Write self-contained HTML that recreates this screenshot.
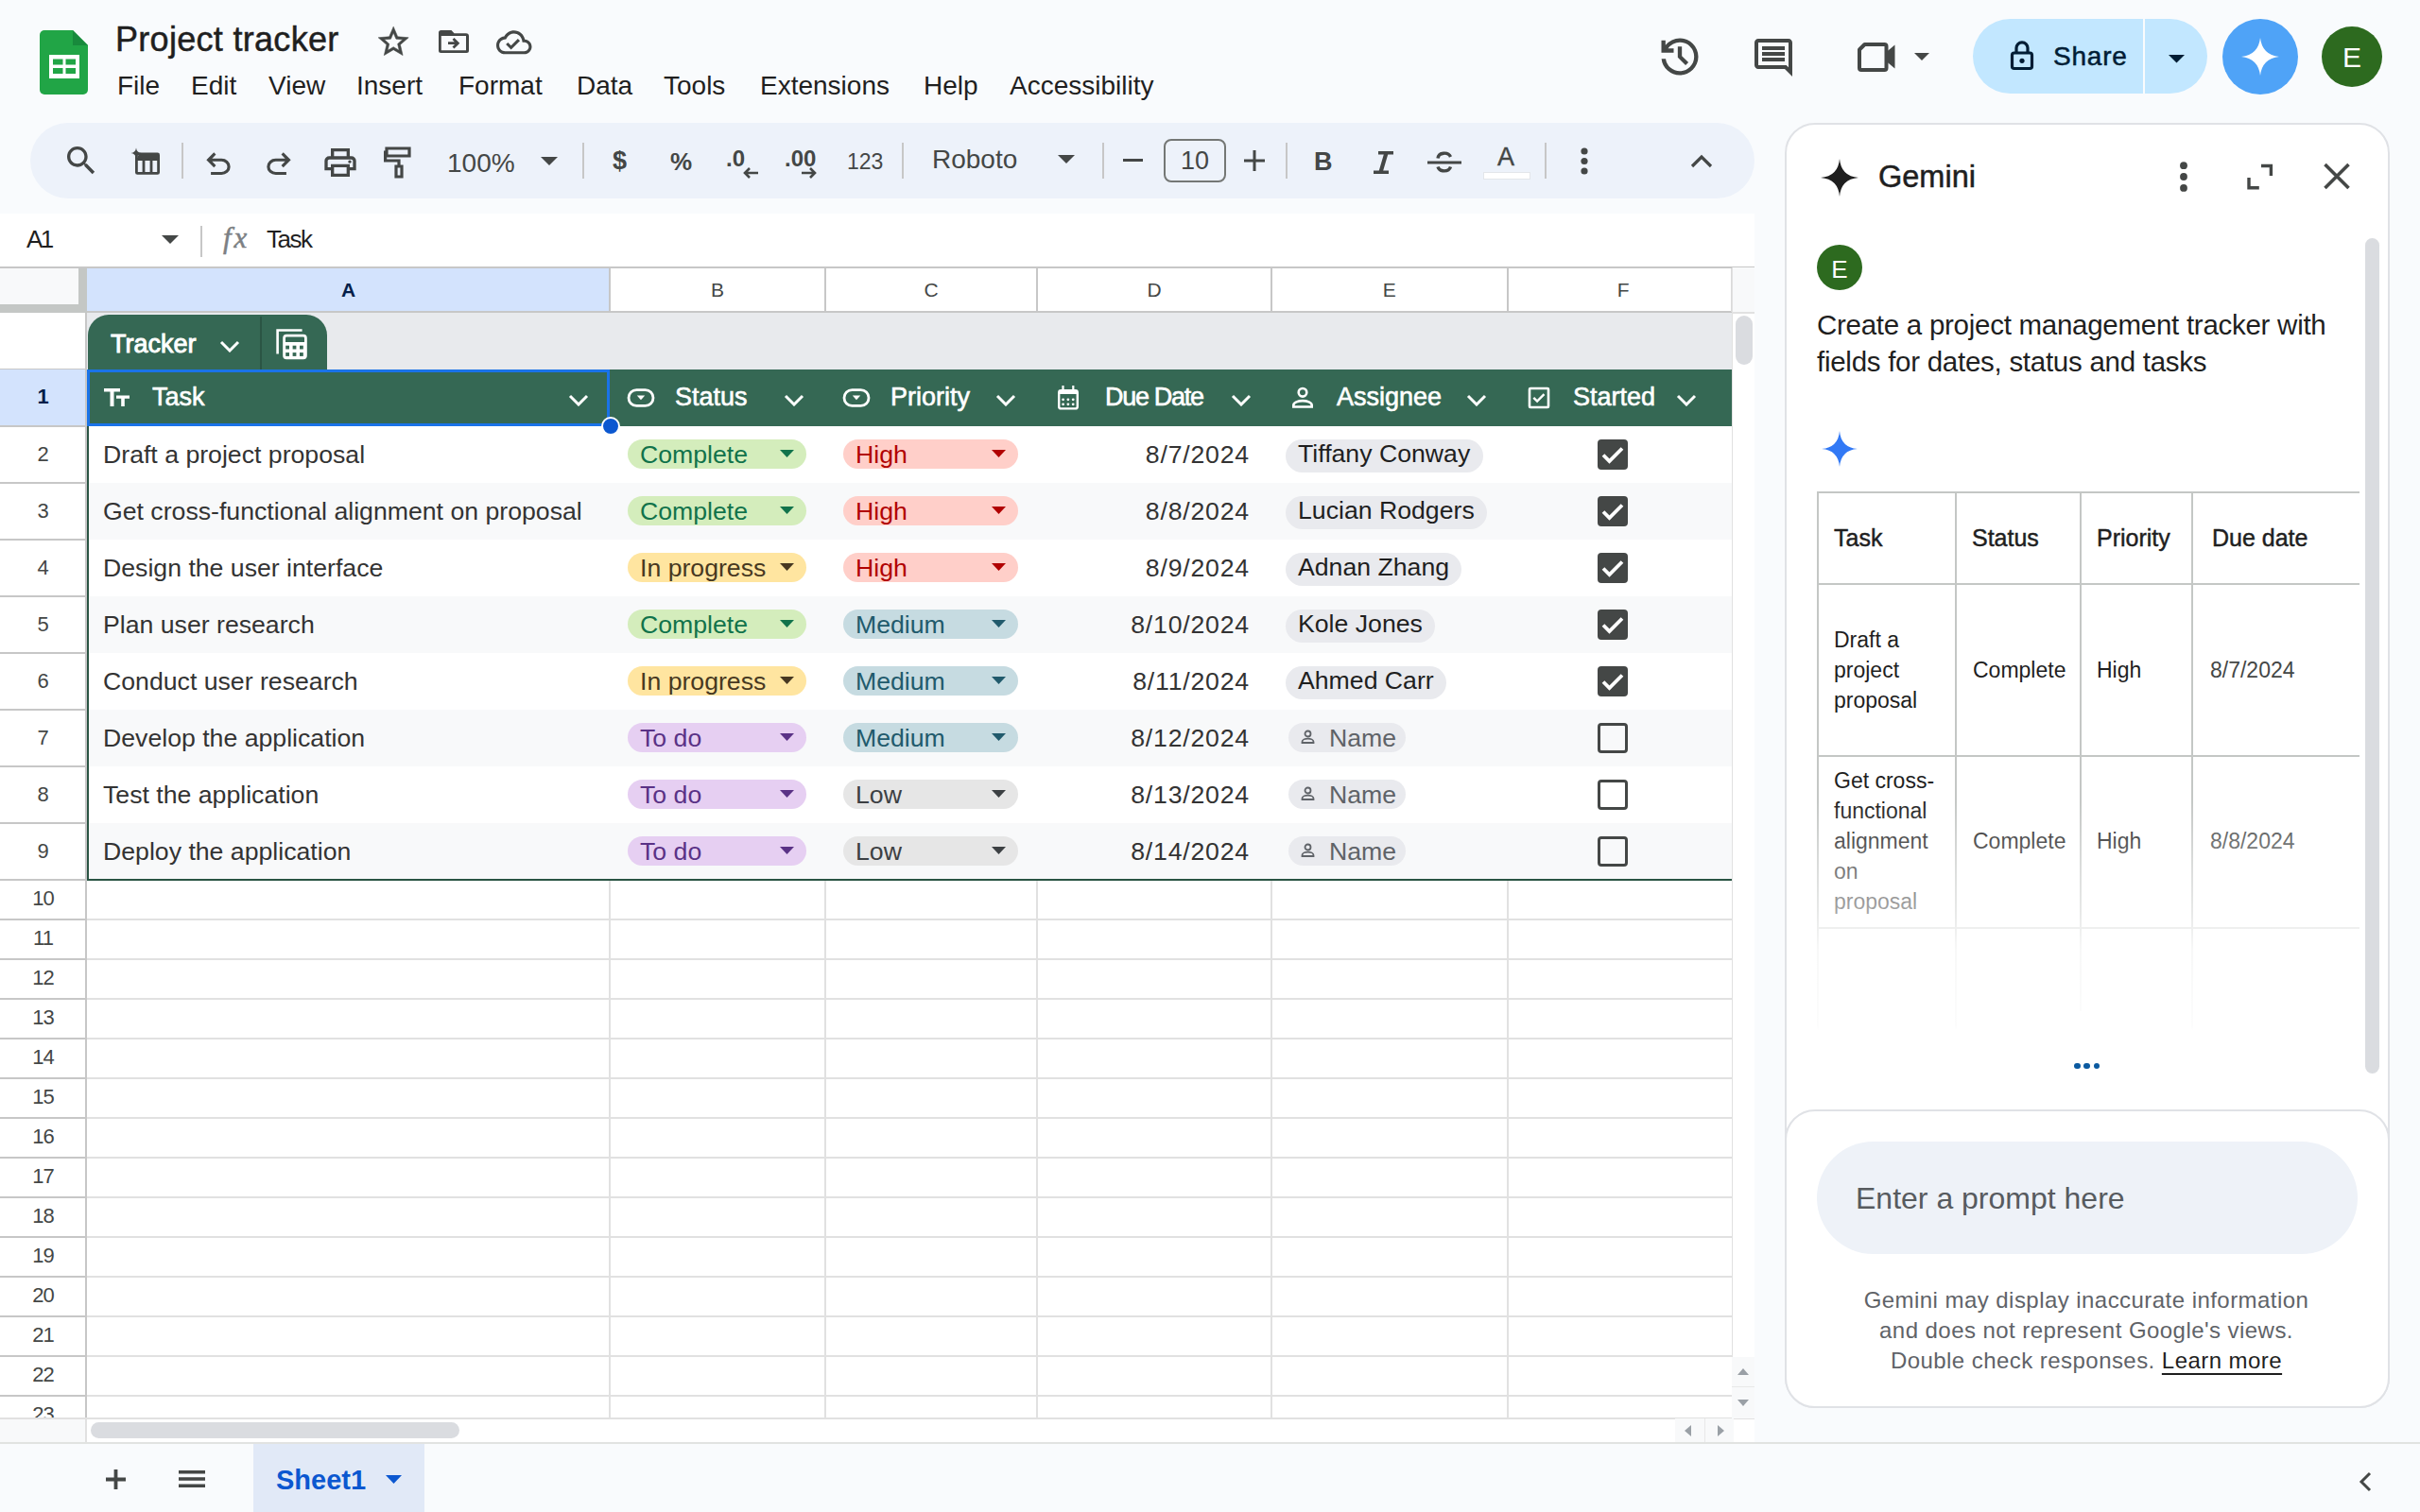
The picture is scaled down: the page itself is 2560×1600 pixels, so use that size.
<!DOCTYPE html><html><head><meta charset="utf-8"><style>
html,body{margin:0;padding:0;}
body{width:2560px;height:1600px;overflow:hidden;position:relative;background:#f9fbfd;font-family:"Liberation Sans",sans-serif;}
.t{position:absolute;line-height:1;white-space:pre;}
.r{position:absolute;}
</style></head><body>
<svg class="r" style="left:42px;top:32px;" width="51" height="68" viewBox="0 0 51 68"><path d="M0 5a5 5 0 0 1 5-5h30l16 16v47a5 5 0 0 1-5 5H5a5 5 0 0 1-5-5z" fill="#21a546"/><path d="M35 0l16 16H35z" fill="#188a3c"/><path d="M10 26h32v25H10z" fill="#fff"/><path d="M14 30.5h10.5v6H14zM27.5 30.5H38v6H27.5zM14 40h10.5v6H14zM27.5 40H38v6H27.5z" fill="#21a546"/></svg>
<div class="t" style="left:122px;top:24.02px;font-size:36px;color:#1f1f1f;-webkit-text-stroke:0.5px #1f1f1f;letter-spacing:0.3px;">Project tracker</div>
<svg class="r" style="left:396.8px;top:25px;" width="38.4" height="38.4" viewBox="0 0 24 24"><path fill="#444746" stroke="#444746" stroke-width="0.35" d="M22 9.24l-7.19-.62L12 2 9.19 8.63 2 9.24l5.46 4.73L5.82 21 12 17.27 18.18 21l-1.63-7.03L22 9.24zM12 15.4l-3.76 2.27 1-4.28-3.32-2.88 4.38-.38L12 6.1l1.71 4.04 4.38.38-3.32 2.88 1 4.28L12 15.4z"/></svg>
<svg class="r" style="left:460px;top:28px;" width="40" height="32" viewBox="460 28 40 32"><path fill="#444746" fill-rule="evenodd" d="M464 34.5q0-2.5 2.5-2.5h11l3 3.2h12.5q3 0 3 3v15.3q0 2.5-2.5 2.5h-27q-2.5 0-2.5-2.5zM466.8 38v15.2h26.2V38z"/><path fill="none" stroke="#444746" stroke-width="2.8" d="M474 45.7h9.5M479.5 41l4.8 4.7-4.8 4.8"/></svg>
<svg class="r" style="left:525px;top:26px;" width="37.5" height="37.5" viewBox="0 0 24 24"><path fill="#444746" d="M19.35 10.04C18.67 6.590 15.64 4 12 4 9.11 4 6.6 5.64 5.35 8.04 2.34 8.36 0 10.91 0 14c0 3.31 2.69 6 6 6h13c2.76 0 5-2.24 5-5 0-2.64-2.05-4.78-4.65-4.96zM19 18H6c-2.21 0-4-1.79-4-4 0-2.05 1.53-3.76 3.56-3.97l1.07-.11.5-.95C8.08 7.14 9.94 6 12 6c2.62 0 4.88 1.86 5.39 4.43l.3 1.5 1.53.11c1.56.1 2.78 1.41 2.78 2.96 0 1.65-1.35 3-3 3zm-9-3.82l-2.090-2.09L6.5 13.5 10 17l6.01-6.01-1.41-1.41z"/></svg>
<div class="t" style="left:124px;top:76.79px;font-size:28px;color:#1f1f1f;">File</div>
<div class="t" style="left:202px;top:76.79px;font-size:28px;color:#1f1f1f;">Edit</div>
<div class="t" style="left:284px;top:76.79px;font-size:28px;color:#1f1f1f;">View</div>
<div class="t" style="left:377px;top:76.79px;font-size:28px;color:#1f1f1f;">Insert</div>
<div class="t" style="left:485px;top:76.79px;font-size:28px;color:#1f1f1f;">Format</div>
<div class="t" style="left:610px;top:76.79px;font-size:28px;color:#1f1f1f;">Data</div>
<div class="t" style="left:702px;top:76.79px;font-size:28px;color:#1f1f1f;">Tools</div>
<div class="t" style="left:804px;top:76.79px;font-size:28px;color:#1f1f1f;">Extensions</div>
<div class="t" style="left:977px;top:76.79px;font-size:28px;color:#1f1f1f;">Help</div>
<div class="t" style="left:1068px;top:76.79px;font-size:28px;color:#1f1f1f;">Accessibility</div>
<svg class="r" style="left:1751px;top:34px;" width="52" height="52" viewBox="0 -960 960 960"><path fill="#444746" d="M480-120q-138 0-240.5-91.5T122-440h82q14 104 92.5 172T480-200q117 0 198.5-81.5T760-480q0-117-81.5-198.5T480-760q-69 0-129 32t-101 88h110v80H120v-240h80v94q51-64 124.5-99T480-840q75 0 140.5 28.5t114 77q48.5 48.5 77 114T840-480q0 75-28.5 140.5t-77 114q-48.5 48.5-114 77T480-120Zm112-192L440-464v-216h80v184l128 128-56 56Z"/></svg>
<svg class="r" style="left:1852px;top:37px;" width="48" height="48" viewBox="0 0 24 24"><path fill="#444746" d="M21.99 4c0-1.1-.89-2-1.99-2H4c-1.1 0-2 .9-2 2v12c0 1.1.9 2 2 2h14l4 4-.01-18zM20 4v13.17L18.83 16H4V4h16zM6 12h12v2H6zm0-3h12v2H6zm0-3h12v2H6z"/></svg>
<svg class="r" style="left:1962px;top:42px;" width="46" height="36" viewBox="0 0 46 36"><path fill="none" stroke="#444746" stroke-width="4" stroke-linejoin="round" d="M10.5 5h21a2 2 0 0 1 2 2v23a2 2 0 0 1-2 2H7a2 2 0 0 1-2-2V10.5z"/><path fill="#444746" d="M33.5 13l9-7.5v25l-9-7.5z"/></svg>
<svg class="r" style="left:2025px;top:56px;" width="16" height="8" viewBox="0 0 16 8"><path fill="#444746" d="M0 0h16l-8 8z"/></svg>
<div class="r" style="left:2087px;top:20px;width:248px;height:79px;background:#c2e7ff;border-radius:40px;"></div>
<div class="r" style="left:2267px;top:20px;width:2px;height:79px;background:#f9fbfd;"></div>
<svg class="r" style="left:2120px;top:38px;" width="40" height="40" viewBox="2120 38 40 40"><rect x="2128.5" y="56" width="21" height="16.5" rx="2.2" fill="none" stroke="#001d35" stroke-width="3.2"/><path fill="none" stroke="#001d35" stroke-width="3.2" d="M2133 56v-5.2a6 6 0 0 1 12 0V56"/><circle cx="2139" cy="64.3" r="2.6" fill="#001d35"/></svg>
<div class="t" style="left:2172px;top:45.79px;font-size:28px;color:#001d35;-webkit-text-stroke:0.5px #001d35;letter-spacing:0.8px;">Share</div>
<svg class="r" style="left:2294px;top:57.5px;" width="17" height="9" viewBox="0 0 17 9"><path fill="#001d35" d="M0 0h17l-8.5 8.5z"/></svg>
<div class="r" style="left:2351px;top:20px;width:80px;height:80px;background:#4fa3f7;border-radius:50%;"></div>
<svg class="r" style="left:2367px;top:36px;" width="48" height="48" viewBox="0 0 24 24"><path fill="#fff" d="M12 2 Q13 11 22 12 Q13 13 12 22 Q11 13 2 12 Q11 11 12 2Z"/></svg>
<div class="r" style="left:2456px;top:28px;width:64px;height:64px;background:#2d6a1f;border-radius:50%;"></div>
<div class="t" style="left:1988px;width:1000px;text-align:center;top:46.10px;font-size:30px;color:#fff;">E</div>
<div class="r" style="left:32px;top:130px;width:1824px;height:80px;background:#edf2fa;border-radius:40px;"></div>
<svg class="r" style="left:66px;top:150px;" width="40" height="40" viewBox="0 0 24 24"><path fill="#444746" d="M15.5 14h-.79l-.28-.27C15.41 12.59 16 11.110 16 9.5 16 5.91 13.09 3 9.5 3S3 5.91 3 9.5 5.91 16 9.5 16c1.61 0 3.09-.59 4.23-1.57l.27.28v.79l5 4.99L20.49 19l-4.99-5zm-6 0C7.01 14 5 11.99 5 9.5S7.01 5 9.5 5 14 7.01 14 9.5 11.990 14 9.5 14z"/></svg>
<svg class="r" style="left:138px;top:154px;" width="34" height="34" viewBox="138 154 34 34"><path fill="none" stroke="#444746" stroke-width="2.8" d="M145.4 163h21.2a1 1 0 0 1 1 1v18.4a1 1 0 0 1-1 1h-21.2a1 1 0 0 1-1-1V164a1 1 0 0 1 1-1zM144.4 168.5h23.2M152 168.5v14.9M160 168.5v14.9"/><path fill="#444746" d="M149 162h18.6v5.5H145.4v-2z"/><path fill="#444746" d="M144 156.5 Q144.6 161.4 149.5 162 Q144.6 162.6 144 167.5 Q143.4 162.6 138.5 162 Q143.4 161.4 144 156.5Z"/></svg>
<div class="r" style="left:192px;top:151px;width:2px;height:38px;background:#c7c7c7;"></div>
<svg class="r" style="left:212px;top:155px;" width="38" height="38" viewBox="0 -960 960 960"><path fill="#444746" d="M280-200v-80h284q63 0 109.5-40T720-420q0-60-46.5-100T564-560H312l104 104-56 56-200-200 200-200 56 56-104 104h252q97 0 166.5 63T800-420q0 94-69.5 157T564-200H280Z"/></svg>
<svg class="r" style="left:276px;top:155px;" width="38" height="38" viewBox="0 -960 960 960"><path fill="#444746" d="M396-200q-97 0-166.5-63T160-420q0-94 69.5-157T396-640h252L544-744l56-56 200 200-200 200-56-56 104-104H396q-63 0-109.5 40T240-420q0 60 46.5 100T396-280h284v80H396Z"/></svg>
<svg class="r" style="left:340px;top:152px;" width="40" height="40" viewBox="0 -960 960 960"><path fill="#444746" d="M640-640v-120H320v120h-80v-200h480v200h-80Zm-480 80h640-640Zm560 100q17 0 28.5-11.5T760-500q0-17-11.5-28.5T720-540q-17 0-28.5 11.5T680-500q0 17 11.5 28.5T720-460Zm-80 260v-160H320v160h320Zm80 80H240v-160H80v-240q0-51 35-85.5t85-34.5h560q51 0 85.5 34.5T880-520v240H720v160Zm80-240v-160q0-17-11.5-28.5T760-560H200q-17 0-28.5 11.5T160-520v160h80v-80h480v80h80Z"/></svg>
<svg class="r" style="left:406px;top:154px;" width="32" height="36" viewBox="0 0 32 36"><path fill="none" stroke="#444746" stroke-width="3.2" d="M3 3h24v8H3zM3 7H1.6v9H16v5"/><path fill="none" stroke="#444746" stroke-width="3.2" d="M13 22h6v11h-6z"/></svg>
<div class="t" style="left:473px;top:158.79px;font-size:28px;color:#444746;">100%</div>
<svg class="r" style="left:572px;top:166px;" width="20" height="10" viewBox="0 0 20 10"><path fill="#444746" d="M0 0h18l-9 9z"/></svg>
<div class="r" style="left:616px;top:151px;width:2px;height:38px;background:#c7c7c7;"></div>
<div class="t" style="left:648px;top:157.14px;font-size:27px;color:#444746;font-weight:bold;">$</div>
<div class="t" style="left:709px;top:157.99px;font-size:26px;color:#444746;font-weight:bold;">%</div>
<div class="t" style="left:768px;top:155.68px;font-size:24px;color:#444746;font-weight:bold;">.0</div>
<svg class="r" style="left:785px;top:177px;" width="18" height="12" viewBox="0 0 18 12"><path fill="none" stroke="#444746" stroke-width="2.6" d="M17 6H3M8 1L3 6l5 5"/></svg>
<div class="t" style="left:830px;top:155.68px;font-size:24px;color:#444746;font-weight:bold;">.00</div>
<svg class="r" style="left:847px;top:177px;" width="18" height="12" viewBox="0 0 18 12"><path fill="none" stroke="#444746" stroke-width="2.6" d="M1 6h14M10 1l5 5-5 5"/></svg>
<div class="t" style="left:896px;top:159.53px;font-size:23px;color:#444746;">123</div>
<div class="r" style="left:954px;top:151px;width:2px;height:38px;background:#c7c7c7;"></div>
<div class="t" style="left:986px;top:154.79px;font-size:28px;color:#444746;">Roboto</div>
<svg class="r" style="left:1119px;top:164px;" width="20" height="10" viewBox="0 0 20 10"><path fill="#444746" d="M0 0h18l-9 9z"/></svg>
<div class="r" style="left:1166px;top:151px;width:2px;height:38px;background:#c7c7c7;"></div>
<div class="r" style="left:1188px;top:168px;width:21px;height:3px;background:#444746;"></div>
<div class="r" style="left:1231px;top:147px;width:66px;height:46px;background:transparent;border:2px solid #747775;border-radius:8px;box-sizing:border-box;"></div>
<div class="t" style="left:764px;width:1000px;text-align:center;top:157.14px;font-size:27px;color:#444746;">10</div>
<svg class="r" style="left:1316px;top:159px;" width="22" height="22" viewBox="0 0 22 22"><path fill="#444746" d="M9.5 0h3v9.5H22v3h-9.5V22h-3v-9.5H0v-3h9.5z"/></svg>
<div class="r" style="left:1360px;top:151px;width:2px;height:38px;background:#c7c7c7;"></div>
<div class="t" style="left:1390px;top:158.14px;font-size:27px;color:#444746;font-weight:bold;">B</div>
<svg class="r" style="left:1452px;top:160px;" width="24" height="24" viewBox="0 0 24 24"><path fill="#444746" d="M6 0h16v3.5h-5.8L11.2 20.5H17V24H1v-3.5h5.8L11.8 3.5H6z"/></svg>
<svg class="r" style="left:1510px;top:159px;" width="36" height="26" viewBox="0 0 36 26"><path fill="#444746" d="M0 11.5h36v3H0z"/><path fill="none" stroke="#444746" stroke-width="3.4" d="M11 8.5a7 6 0 0 1 13.5-1.5M11 17.5a7 6 0 0 0 13.5 0"/></svg>
<div class="t" style="left:1584px;top:153.14px;font-size:27px;color:#444746;-webkit-text-stroke:0.4px #444746;">A</div>
<div class="r" style="left:1570px;top:183px;width:48px;height:6px;background:#ffffff;box-shadow:0 0 0 1px #e3e6ea;"></div>
<div class="r" style="left:1634px;top:151px;width:2px;height:38px;background:#c7c7c7;"></div>
<svg class="r" style="left:1665px;top:156px;" width="22" height="30" viewBox="0 0 22 30"><circle cx="11" cy="4" r="3.6" fill="#444746"/><circle cx="11" cy="14.5" r="3.6" fill="#444746"/><circle cx="11" cy="25" r="3.6" fill="#444746"/></svg>
<svg class="r" style="left:1788px;top:163px;" width="24" height="16" viewBox="0 0 24 16"><path fill="none" stroke="#444746" stroke-width="3.2" d="M2 13l10-10 10 10"/></svg>
<div class="r" style="left:0px;top:226px;width:1856px;height:57px;background:#ffffff;"></div>
<div class="t" style="left:28px;top:239.99px;font-size:26px;color:#1f1f1f;letter-spacing:-2.5px;">A1</div>
<svg class="r" style="left:171px;top:249px;" width="18" height="9" viewBox="0 0 18 9"><path fill="#444746" d="M0 0h18l-9 9z"/></svg>
<div class="r" style="left:212px;top:239px;width:2px;height:33px;background:#c7c7c7;"></div>
<div class="t" style="left:236px;top:235.75px;font-size:31px;color:#7c7f83;-webkit-text-stroke:0.5px #7c7f83;letter-spacing:3px;font-family:'Liberation Serif',serif;"><i>fx</i></div>
<div class="t" style="left:282px;top:239.99px;font-size:26px;color:#1f1f1f;letter-spacing:-1.5px;">Task</div>
<div class="r" style="left:0px;top:283px;width:1856px;height:1218px;background:#ffffff;"></div>
<div class="r" style="left:0px;top:282px;width:1856px;height:2px;background:#c7c7c7;"></div>
<div class="r" style="left:0px;top:284px;width:83px;height:38px;background:#f8f9fa;"></div>
<div class="r" style="left:83px;top:284px;width:9px;height:47px;background:#c4c7c5;"></div>
<div class="r" style="left:0px;top:322px;width:92px;height:9px;background:#c4c7c5;"></div>
<div class="r" style="left:92px;top:284px;width:553px;height:47px;background:#d3e3fd;"></div>
<div class="r" style="left:92px;top:329px;width:1740px;height:2px;background:#c7c7c7;"></div>
<div class="r" style="left:644px;top:284px;width:2px;height:46px;background:#c7c7c7;"></div>
<div class="r" style="left:872px;top:284px;width:2px;height:46px;background:#c7c7c7;"></div>
<div class="r" style="left:1096px;top:284px;width:2px;height:46px;background:#c7c7c7;"></div>
<div class="r" style="left:1344px;top:284px;width:2px;height:46px;background:#c7c7c7;"></div>
<div class="r" style="left:1593.5px;top:284px;width:2px;height:46px;background:#c7c7c7;"></div>
<div class="r" style="left:1831px;top:284px;width:2px;height:46px;background:#dadada;"></div>
<div class="t" style="left:-131.5px;width:1000px;text-align:center;top:296.22px;font-size:21px;color:#041e49;font-weight:bold;">A</div>
<div class="t" style="left:259.0px;width:1000px;text-align:center;top:296.22px;font-size:21px;color:#444746;">B</div>
<div class="t" style="left:485.0px;width:1000px;text-align:center;top:296.22px;font-size:21px;color:#444746;">C</div>
<div class="t" style="left:721.0px;width:1000px;text-align:center;top:296.22px;font-size:21px;color:#444746;">D</div>
<div class="t" style="left:969.75px;width:1000px;text-align:center;top:296.22px;font-size:21px;color:#444746;">E</div>
<div class="t" style="left:1217.25px;width:1000px;text-align:center;top:296.22px;font-size:21px;color:#444746;">F</div>
<div class="r" style="left:1832px;top:283px;width:24px;height:1218px;background:#ffffff;"></div>
<div class="r" style="left:1832px;top:283px;width:24px;height:47px;background:#f8f9fa;"></div>
<div class="r" style="left:1832px;top:283px;width:1px;height:1218px;background:#e1e1e1;"></div>
<div class="r" style="left:1836px;top:334px;width:18px;height:52px;background:#dadce0;border-radius:9px;"></div>
<div class="r" style="left:1832px;top:330px;width:24px;height:2px;background:#e1e1e1;"></div>
<div class="r" style="left:90px;top:331px;width:2px;height:1170px;background:#c7c7c7;"></div>
<div class="r" style="left:0px;top:390px;width:90px;height:2px;background:#c7c7c7;"></div>
<div class="r" style="left:0px;top:450px;width:90px;height:2px;background:#c7c7c7;"></div>
<div class="r" style="left:0px;top:510px;width:90px;height:2px;background:#c7c7c7;"></div>
<div class="r" style="left:0px;top:570px;width:90px;height:2px;background:#c7c7c7;"></div>
<div class="r" style="left:0px;top:630px;width:90px;height:2px;background:#c7c7c7;"></div>
<div class="r" style="left:0px;top:690px;width:90px;height:2px;background:#c7c7c7;"></div>
<div class="r" style="left:0px;top:750px;width:90px;height:2px;background:#c7c7c7;"></div>
<div class="r" style="left:0px;top:810px;width:90px;height:2px;background:#c7c7c7;"></div>
<div class="r" style="left:0px;top:870px;width:90px;height:2px;background:#c7c7c7;"></div>
<div class="r" style="left:0px;top:930px;width:90px;height:2px;background:#c7c7c7;"></div>
<div class="r" style="left:0px;top:972px;width:90px;height:2px;background:#c7c7c7;"></div>
<div class="r" style="left:0px;top:1014px;width:90px;height:2px;background:#c7c7c7;"></div>
<div class="r" style="left:0px;top:1056px;width:90px;height:2px;background:#c7c7c7;"></div>
<div class="r" style="left:0px;top:1098px;width:90px;height:2px;background:#c7c7c7;"></div>
<div class="r" style="left:0px;top:1140px;width:90px;height:2px;background:#c7c7c7;"></div>
<div class="r" style="left:0px;top:1182px;width:90px;height:2px;background:#c7c7c7;"></div>
<div class="r" style="left:0px;top:1224px;width:90px;height:2px;background:#c7c7c7;"></div>
<div class="r" style="left:0px;top:1266px;width:90px;height:2px;background:#c7c7c7;"></div>
<div class="r" style="left:0px;top:1308px;width:90px;height:2px;background:#c7c7c7;"></div>
<div class="r" style="left:0px;top:1350px;width:90px;height:2px;background:#c7c7c7;"></div>
<div class="r" style="left:0px;top:1392px;width:90px;height:2px;background:#c7c7c7;"></div>
<div class="r" style="left:0px;top:1434px;width:90px;height:2px;background:#c7c7c7;"></div>
<div class="r" style="left:0px;top:1476px;width:90px;height:2px;background:#c7c7c7;"></div>
<div class="r" style="left:0px;top:391px;width:90px;height:59px;background:#d3e3fd;"></div>
<div class="t" style="left:-454.5px;width:1000px;text-align:center;top:409.37px;font-size:22px;color:#041e49;font-weight:bold;">1</div>
<div class="t" style="left:-454.5px;width:1000px;text-align:center;top:469.87px;font-size:22px;color:#444746;">2</div>
<div class="t" style="left:-454.5px;width:1000px;text-align:center;top:529.87px;font-size:22px;color:#444746;">3</div>
<div class="t" style="left:-454.5px;width:1000px;text-align:center;top:589.87px;font-size:22px;color:#444746;">4</div>
<div class="t" style="left:-454.5px;width:1000px;text-align:center;top:649.87px;font-size:22px;color:#444746;">5</div>
<div class="t" style="left:-454.5px;width:1000px;text-align:center;top:709.87px;font-size:22px;color:#444746;">6</div>
<div class="t" style="left:-454.5px;width:1000px;text-align:center;top:769.87px;font-size:22px;color:#444746;">7</div>
<div class="t" style="left:-454.5px;width:1000px;text-align:center;top:829.87px;font-size:22px;color:#444746;">8</div>
<div class="t" style="left:-454.5px;width:1000px;text-align:center;top:889.87px;font-size:22px;color:#444746;">9</div>
<div class="t" style="left:-454.5px;width:1000px;text-align:center;top:939.57px;font-size:22px;color:#444746;letter-spacing:-1px;">10</div>
<div class="t" style="left:-454.5px;width:1000px;text-align:center;top:981.57px;font-size:22px;color:#444746;letter-spacing:-1px;">11</div>
<div class="t" style="left:-454.5px;width:1000px;text-align:center;top:1023.57px;font-size:22px;color:#444746;letter-spacing:-1px;">12</div>
<div class="t" style="left:-454.5px;width:1000px;text-align:center;top:1065.57px;font-size:22px;color:#444746;letter-spacing:-1px;">13</div>
<div class="t" style="left:-454.5px;width:1000px;text-align:center;top:1107.57px;font-size:22px;color:#444746;letter-spacing:-1px;">14</div>
<div class="t" style="left:-454.5px;width:1000px;text-align:center;top:1149.57px;font-size:22px;color:#444746;letter-spacing:-1px;">15</div>
<div class="t" style="left:-454.5px;width:1000px;text-align:center;top:1191.57px;font-size:22px;color:#444746;letter-spacing:-1px;">16</div>
<div class="t" style="left:-454.5px;width:1000px;text-align:center;top:1233.57px;font-size:22px;color:#444746;letter-spacing:-1px;">17</div>
<div class="t" style="left:-454.5px;width:1000px;text-align:center;top:1275.57px;font-size:22px;color:#444746;letter-spacing:-1px;">18</div>
<div class="t" style="left:-454.5px;width:1000px;text-align:center;top:1317.57px;font-size:22px;color:#444746;letter-spacing:-1px;">19</div>
<div class="t" style="left:-454.5px;width:1000px;text-align:center;top:1359.57px;font-size:22px;color:#444746;letter-spacing:-1px;">20</div>
<div class="t" style="left:-454.5px;width:1000px;text-align:center;top:1401.57px;font-size:22px;color:#444746;letter-spacing:-1px;">21</div>
<div class="t" style="left:-454.5px;width:1000px;text-align:center;top:1443.57px;font-size:22px;color:#444746;letter-spacing:-1px;">22</div>
<div class="t" style="left:-454.5px;width:1000px;text-align:center;top:1485.57px;font-size:22px;color:#444746;letter-spacing:-1px;">23</div>
<div class="r" style="left:92px;top:972px;width:1740px;height:2px;background:#e1e1e1;"></div>
<div class="r" style="left:92px;top:1014px;width:1740px;height:2px;background:#e1e1e1;"></div>
<div class="r" style="left:92px;top:1056px;width:1740px;height:2px;background:#e1e1e1;"></div>
<div class="r" style="left:92px;top:1098px;width:1740px;height:2px;background:#e1e1e1;"></div>
<div class="r" style="left:92px;top:1140px;width:1740px;height:2px;background:#e1e1e1;"></div>
<div class="r" style="left:92px;top:1182px;width:1740px;height:2px;background:#e1e1e1;"></div>
<div class="r" style="left:92px;top:1224px;width:1740px;height:2px;background:#e1e1e1;"></div>
<div class="r" style="left:92px;top:1266px;width:1740px;height:2px;background:#e1e1e1;"></div>
<div class="r" style="left:92px;top:1308px;width:1740px;height:2px;background:#e1e1e1;"></div>
<div class="r" style="left:92px;top:1350px;width:1740px;height:2px;background:#e1e1e1;"></div>
<div class="r" style="left:92px;top:1392px;width:1740px;height:2px;background:#e1e1e1;"></div>
<div class="r" style="left:92px;top:1434px;width:1740px;height:2px;background:#e1e1e1;"></div>
<div class="r" style="left:92px;top:1476px;width:1740px;height:2px;background:#e1e1e1;"></div>
<div class="r" style="left:644px;top:931px;width:2px;height:570px;background:#e1e1e1;"></div>
<div class="r" style="left:872px;top:931px;width:2px;height:570px;background:#e1e1e1;"></div>
<div class="r" style="left:1096px;top:931px;width:2px;height:570px;background:#e1e1e1;"></div>
<div class="r" style="left:1344px;top:931px;width:2px;height:570px;background:#e1e1e1;"></div>
<div class="r" style="left:1593.5px;top:931px;width:2px;height:570px;background:#e1e1e1;"></div>
<div class="r" style="left:92px;top:331px;width:1740px;height:60px;background:#e8eaed;"></div>
<div class="r" style="left:92.5px;top:332.5px;width:253px;height:58.5px;background:#356854;border-radius:22px 22px 0 0;"></div>
<div class="r" style="left:274.5px;top:335px;width:2px;height:56px;background:rgba(0,0,0,0.18);"></div>
<div class="t" style="left:117px;top:350.94px;font-size:27px;color:#ffffff;-webkit-text-stroke:0.9px #ffffff;">Tracker</div>
<svg class="r" style="left:232px;top:360px;" width="22" height="13" viewBox="0 0 22 13"><path fill="none" stroke="#fff" stroke-width="3" d="M2 2l9 9 9-9"/></svg>
<svg class="r" style="left:288px;top:344px;" width="40" height="40" viewBox="288 344 40 40"><path fill="none" stroke="#fff" stroke-width="2.6" d="M293.6 374.5V349.5h26"/><rect x="300.6" y="355.2" width="22.8" height="23.6" rx="2.5" fill="none" stroke="#fff" stroke-width="2.8"/><path fill="#fff" d="M300 362h24v17h-24z"/><g fill="#356854"><rect x="302.2" y="365.7" width="3.8" height="3.8"/><rect x="309.6" y="365.7" width="3.8" height="3.8"/><rect x="317" y="365.7" width="3.8" height="3.8"/><rect x="302.2" y="373.1" width="3.8" height="3.8"/><rect x="309.6" y="373.1" width="3.8" height="3.8"/><rect x="317" y="373.1" width="3.8" height="3.8"/></g></svg>
<div class="r" style="left:92px;top:391px;width:1740px;height:60px;background:#356854;"></div>
<svg class="r" style="left:110px;top:411px;" width="28" height="20" viewBox="0 0 28 20"><path fill="#fff" d="M0 0h17v3.6H10.5V19H6.5V3.6H0zM13 7.5h14v3.2h-5.2V19h-3.6v-8.3H13z"/></svg>
<div class="t" style="left:161px;top:407.44px;font-size:27px;color:#ffffff;-webkit-text-stroke:0.6px #ffffff;">Task</div>
<svg class="r" style="left:601px;top:417px;" width="22" height="13" viewBox="0 0 22 13"><path fill="none" stroke="#fff" stroke-width="3" d="M2 2l9 9 9-9"/></svg>
<svg class="r" style="left:662px;top:410px;" width="32" height="22" viewBox="0 0 32 22"><rect x="3" y="2.6" width="26" height="16.8" rx="8.4" fill="none" stroke="#fff" stroke-width="2.8"/><path fill="#fff" d="M11.8 8.6h8.4l-4.2 4.6z"/></svg>
<div class="t" style="left:714px;top:407.44px;font-size:27px;color:#ffffff;-webkit-text-stroke:0.6px #ffffff;">Status</div>
<svg class="r" style="left:829px;top:417px;" width="22" height="13" viewBox="0 0 22 13"><path fill="none" stroke="#fff" stroke-width="3" d="M2 2l9 9 9-9"/></svg>
<svg class="r" style="left:890px;top:410px;" width="32" height="22" viewBox="0 0 32 22"><rect x="3" y="2.6" width="26" height="16.8" rx="8.4" fill="none" stroke="#fff" stroke-width="2.8"/><path fill="#fff" d="M11.8 8.6h8.4l-4.2 4.6z"/></svg>
<div class="t" style="left:942px;top:407.44px;font-size:27px;color:#ffffff;-webkit-text-stroke:0.6px #ffffff;">Priority</div>
<svg class="r" style="left:1053px;top:417px;" width="22" height="13" viewBox="0 0 22 13"><path fill="none" stroke="#fff" stroke-width="3" d="M2 2l9 9 9-9"/></svg>
<svg class="r" style="left:1115px;top:405px;" width="30" height="32" viewBox="1115 405 30 32"><rect x="1120.2" y="413.2" width="19.6" height="19.2" rx="2.2" fill="none" stroke="#fff" stroke-width="2.4"/><path fill="#fff" d="M1120 413h20v4h-20z"/><path fill="none" stroke="#fff" stroke-width="2.2" d="M1124.5 408v5M1135.3 408v5"/><g fill="#fff"><circle cx="1124.6" cy="422.8" r="1.4"/><circle cx="1129.9" cy="422.8" r="1.4"/><circle cx="1135.2" cy="422.8" r="1.4"/><circle cx="1124.6" cy="427.8" r="1.4"/><circle cx="1129.9" cy="427.8" r="1.4"/><circle cx="1135.2" cy="427.8" r="1.4"/></g></svg>
<div class="t" style="left:1169px;top:407.44px;font-size:27px;color:#ffffff;-webkit-text-stroke:0.6px #ffffff;letter-spacing:-1.3px;">Due Date</div>
<svg class="r" style="left:1302px;top:417px;" width="22" height="13" viewBox="0 0 22 13"><path fill="none" stroke="#fff" stroke-width="3" d="M2 2l9 9 9-9"/></svg>
<svg class="r" style="left:1364px;top:405px;" width="28" height="30" viewBox="1364 405 28 30"><circle cx="1378" cy="415.3" r="4.3" fill="none" stroke="#fff" stroke-width="2.6"/><path fill="none" stroke="#fff" stroke-width="2.6" d="M1368.3 430.5v-1.8c0-2.6 4.8-4.6 9.7-4.6s9.7 2 9.7 4.6v1.8z"/></svg>
<div class="t" style="left:1414px;top:407.44px;font-size:27px;color:#ffffff;-webkit-text-stroke:0.6px #ffffff;">Assignee</div>
<svg class="r" style="left:1551px;top:417px;" width="22" height="13" viewBox="0 0 22 13"><path fill="none" stroke="#fff" stroke-width="3" d="M2 2l9 9 9-9"/></svg>
<svg class="r" style="left:1612px;top:405px;" width="32" height="32" viewBox="1612 405 32 32"><rect x="1618" y="411" width="20" height="20" rx="1" fill="none" stroke="#fff" stroke-width="2.6"/><path fill="none" stroke="#fff" stroke-width="2.4" d="M1622.3 420.8l3.8 3.8 7.4-7.4"/></svg>
<div class="t" style="left:1664px;top:407.44px;font-size:27px;color:#ffffff;-webkit-text-stroke:0.6px #ffffff;">Started</div>
<svg class="r" style="left:1773px;top:417px;" width="22" height="13" viewBox="0 0 22 13"><path fill="none" stroke="#fff" stroke-width="3" d="M2 2l9 9 9-9"/></svg>
<div class="t" style="left:109px;top:467.72px;font-size:26.67px;color:#333333;">Draft a project proposal</div>
<div class="r" style="left:664px;top:464.5px;width:189px;height:31.5px;background:#d4edbc;border-radius:16px;"></div>
<div class="t" style="left:677px;top:467.72px;font-size:26.67px;color:#11734b;">Complete</div>
<svg class="r" style="left:825px;top:476px;" width="15" height="8" viewBox="0 0 15 8"><path fill="#11734b" d="M0 0h15l-7.5 8z"/></svg>
<div class="r" style="left:892px;top:464.5px;width:185px;height:31.5px;background:#ffcfc9;border-radius:16px;"></div>
<div class="t" style="left:905px;top:467.72px;font-size:26.67px;color:#b10202;">High</div>
<svg class="r" style="left:1049px;top:476px;" width="15" height="8" viewBox="0 0 15 8"><path fill="#b10202" d="M0 0h15l-7.5 8z"/></svg>
<div class="t" style="left:322px;width:1000px;text-align:right;top:467.72px;font-size:26.67px;color:#333333;letter-spacing:0.8px;">8/7/2024</div>
<div class="r" style="left:1360px;top:464.5px;width:208.5359375px;height:35px;background:#e9eaee;border-radius:17.5px;"></div>
<div class="t" style="left:1373px;top:467.42px;font-size:26.67px;color:#1f1f1f;">Tiffany Conway</div>
<div class="r" style="left:1690px;top:465px;width:32px;height:32px;background:#444746;border-radius:4px;"></div>
<svg class="r" style="left:1690px;top:465px;" width="32" height="32" viewBox="0 0 32 32"><path fill="none" stroke="#fff" stroke-width="3.8" d="M6 16.5l6.5 6.5L26 9.5"/></svg>
<div class="r" style="left:94px;top:511px;width:1738px;height:60px;background:#f8f9fa;"></div>
<div class="t" style="left:109px;top:527.72px;font-size:26.67px;color:#333333;">Get cross-functional alignment on proposal</div>
<div class="r" style="left:664px;top:524.5px;width:189px;height:31.5px;background:#d4edbc;border-radius:16px;"></div>
<div class="t" style="left:677px;top:527.72px;font-size:26.67px;color:#11734b;">Complete</div>
<svg class="r" style="left:825px;top:536px;" width="15" height="8" viewBox="0 0 15 8"><path fill="#11734b" d="M0 0h15l-7.5 8z"/></svg>
<div class="r" style="left:892px;top:524.5px;width:185px;height:31.5px;background:#ffcfc9;border-radius:16px;"></div>
<div class="t" style="left:905px;top:527.72px;font-size:26.67px;color:#b10202;">High</div>
<svg class="r" style="left:1049px;top:536px;" width="15" height="8" viewBox="0 0 15 8"><path fill="#b10202" d="M0 0h15l-7.5 8z"/></svg>
<div class="t" style="left:322px;width:1000px;text-align:right;top:527.72px;font-size:26.67px;color:#333333;letter-spacing:0.8px;">8/8/2024</div>
<div class="r" style="left:1360px;top:524.5px;width:213.021875px;height:35px;background:#e9eaee;border-radius:17.5px;"></div>
<div class="t" style="left:1373px;top:527.42px;font-size:26.67px;color:#1f1f1f;">Lucian Rodgers</div>
<div class="r" style="left:1690px;top:525px;width:32px;height:32px;background:#444746;border-radius:4px;"></div>
<svg class="r" style="left:1690px;top:525px;" width="32" height="32" viewBox="0 0 32 32"><path fill="none" stroke="#fff" stroke-width="3.8" d="M6 16.5l6.5 6.5L26 9.5"/></svg>
<div class="t" style="left:109px;top:587.72px;font-size:26.67px;color:#333333;">Design the user interface</div>
<div class="r" style="left:664px;top:584.5px;width:189px;height:31.5px;background:#ffe5a0;border-radius:16px;"></div>
<div class="t" style="left:677px;top:587.72px;font-size:26.67px;color:#473821;">In progress</div>
<svg class="r" style="left:825px;top:596px;" width="15" height="8" viewBox="0 0 15 8"><path fill="#473821" d="M0 0h15l-7.5 8z"/></svg>
<div class="r" style="left:892px;top:584.5px;width:185px;height:31.5px;background:#ffcfc9;border-radius:16px;"></div>
<div class="t" style="left:905px;top:587.72px;font-size:26.67px;color:#b10202;">High</div>
<svg class="r" style="left:1049px;top:596px;" width="15" height="8" viewBox="0 0 15 8"><path fill="#b10202" d="M0 0h15l-7.5 8z"/></svg>
<div class="t" style="left:322px;width:1000px;text-align:right;top:587.72px;font-size:26.67px;color:#333333;letter-spacing:0.8px;">8/9/2024</div>
<div class="r" style="left:1360px;top:584.5px;width:186.3375px;height:35px;background:#e9eaee;border-radius:17.5px;"></div>
<div class="t" style="left:1373px;top:587.42px;font-size:26.67px;color:#1f1f1f;">Adnan Zhang</div>
<div class="r" style="left:1690px;top:585px;width:32px;height:32px;background:#444746;border-radius:4px;"></div>
<svg class="r" style="left:1690px;top:585px;" width="32" height="32" viewBox="0 0 32 32"><path fill="none" stroke="#fff" stroke-width="3.8" d="M6 16.5l6.5 6.5L26 9.5"/></svg>
<div class="r" style="left:94px;top:631px;width:1738px;height:60px;background:#f8f9fa;"></div>
<div class="t" style="left:109px;top:647.72px;font-size:26.67px;color:#333333;">Plan user research</div>
<div class="r" style="left:664px;top:644.5px;width:189px;height:31.5px;background:#d4edbc;border-radius:16px;"></div>
<div class="t" style="left:677px;top:647.72px;font-size:26.67px;color:#11734b;">Complete</div>
<svg class="r" style="left:825px;top:656px;" width="15" height="8" viewBox="0 0 15 8"><path fill="#11734b" d="M0 0h15l-7.5 8z"/></svg>
<div class="r" style="left:892px;top:644.5px;width:185px;height:31.5px;background:#c6dbe1;border-radius:16px;"></div>
<div class="t" style="left:905px;top:647.72px;font-size:26.67px;color:#215a6c;">Medium</div>
<svg class="r" style="left:1049px;top:656px;" width="15" height="8" viewBox="0 0 15 8"><path fill="#215a6c" d="M0 0h15l-7.5 8z"/></svg>
<div class="t" style="left:322px;width:1000px;text-align:right;top:647.72px;font-size:26.67px;color:#333333;letter-spacing:0.8px;">8/10/2024</div>
<div class="r" style="left:1360px;top:644.5px;width:158.109375px;height:35px;background:#e9eaee;border-radius:17.5px;"></div>
<div class="t" style="left:1373px;top:647.42px;font-size:26.67px;color:#1f1f1f;">Kole Jones</div>
<div class="r" style="left:1690px;top:645px;width:32px;height:32px;background:#444746;border-radius:4px;"></div>
<svg class="r" style="left:1690px;top:645px;" width="32" height="32" viewBox="0 0 32 32"><path fill="none" stroke="#fff" stroke-width="3.8" d="M6 16.5l6.5 6.5L26 9.5"/></svg>
<div class="t" style="left:109px;top:707.72px;font-size:26.67px;color:#333333;">Conduct user research</div>
<div class="r" style="left:664px;top:704.5px;width:189px;height:31.5px;background:#ffe5a0;border-radius:16px;"></div>
<div class="t" style="left:677px;top:707.72px;font-size:26.67px;color:#473821;">In progress</div>
<svg class="r" style="left:825px;top:716px;" width="15" height="8" viewBox="0 0 15 8"><path fill="#473821" d="M0 0h15l-7.5 8z"/></svg>
<div class="r" style="left:892px;top:704.5px;width:185px;height:31.5px;background:#c6dbe1;border-radius:16px;"></div>
<div class="t" style="left:905px;top:707.72px;font-size:26.67px;color:#215a6c;">Medium</div>
<svg class="r" style="left:1049px;top:716px;" width="15" height="8" viewBox="0 0 15 8"><path fill="#215a6c" d="M0 0h15l-7.5 8z"/></svg>
<div class="t" style="left:322px;width:1000px;text-align:right;top:707.72px;font-size:26.67px;color:#333333;letter-spacing:0.8px;">8/11/2024</div>
<div class="r" style="left:1360px;top:704.5px;width:169.93125px;height:35px;background:#e9eaee;border-radius:17.5px;"></div>
<div class="t" style="left:1373px;top:707.42px;font-size:26.67px;color:#1f1f1f;">Ahmed Carr</div>
<div class="r" style="left:1690px;top:705px;width:32px;height:32px;background:#444746;border-radius:4px;"></div>
<svg class="r" style="left:1690px;top:705px;" width="32" height="32" viewBox="0 0 32 32"><path fill="none" stroke="#fff" stroke-width="3.8" d="M6 16.5l6.5 6.5L26 9.5"/></svg>
<div class="r" style="left:94px;top:751px;width:1738px;height:60px;background:#f8f9fa;"></div>
<div class="t" style="left:109px;top:767.72px;font-size:26.67px;color:#333333;">Develop the application</div>
<div class="r" style="left:664px;top:764.5px;width:189px;height:31.5px;background:#e6cff2;border-radius:16px;"></div>
<div class="t" style="left:677px;top:767.72px;font-size:26.67px;color:#5a3286;">To do</div>
<svg class="r" style="left:825px;top:776px;" width="15" height="8" viewBox="0 0 15 8"><path fill="#5a3286" d="M0 0h15l-7.5 8z"/></svg>
<div class="r" style="left:892px;top:764.5px;width:185px;height:31.5px;background:#c6dbe1;border-radius:16px;"></div>
<div class="t" style="left:905px;top:767.72px;font-size:26.67px;color:#215a6c;">Medium</div>
<svg class="r" style="left:1049px;top:776px;" width="15" height="8" viewBox="0 0 15 8"><path fill="#215a6c" d="M0 0h15l-7.5 8z"/></svg>
<div class="t" style="left:322px;width:1000px;text-align:right;top:767.72px;font-size:26.67px;color:#333333;letter-spacing:0.8px;">8/12/2024</div>
<div class="r" style="left:1363px;top:764.5px;width:124px;height:31.5px;background:#e9eaee;border-radius:16px;"></div>
<svg class="r" style="left:1376px;top:772px;" width="15" height="16" viewBox="0 0 15 16"><circle cx="7.5" cy="4.5" r="3" fill="none" stroke="#5f6368" stroke-width="1.8"/><path fill="none" stroke="#5f6368" stroke-width="1.8" d="M1.5 14v-1c0-2 3-3.3 6-3.3s6 1.3 6 3.3v1z"/></svg>
<div class="t" style="left:1406px;top:767.72px;font-size:26.67px;color:#5f6368;">Name</div>
<div class="r" style="left:1690px;top:765px;width:32px;height:32px;background:transparent;border:3.5px solid #444746;border-radius:4px;box-sizing:border-box;"></div>
<div class="t" style="left:109px;top:827.72px;font-size:26.67px;color:#333333;">Test the application</div>
<div class="r" style="left:664px;top:824.5px;width:189px;height:31.5px;background:#e6cff2;border-radius:16px;"></div>
<div class="t" style="left:677px;top:827.72px;font-size:26.67px;color:#5a3286;">To do</div>
<svg class="r" style="left:825px;top:836px;" width="15" height="8" viewBox="0 0 15 8"><path fill="#5a3286" d="M0 0h15l-7.5 8z"/></svg>
<div class="r" style="left:892px;top:824.5px;width:185px;height:31.5px;background:#e6e6e6;border-radius:16px;"></div>
<div class="t" style="left:905px;top:827.72px;font-size:26.67px;color:#3c4043;">Low</div>
<svg class="r" style="left:1049px;top:836px;" width="15" height="8" viewBox="0 0 15 8"><path fill="#3c4043" d="M0 0h15l-7.5 8z"/></svg>
<div class="t" style="left:322px;width:1000px;text-align:right;top:827.72px;font-size:26.67px;color:#333333;letter-spacing:0.8px;">8/13/2024</div>
<div class="r" style="left:1363px;top:824.5px;width:124px;height:31.5px;background:#e9eaee;border-radius:16px;"></div>
<svg class="r" style="left:1376px;top:832px;" width="15" height="16" viewBox="0 0 15 16"><circle cx="7.5" cy="4.5" r="3" fill="none" stroke="#5f6368" stroke-width="1.8"/><path fill="none" stroke="#5f6368" stroke-width="1.8" d="M1.5 14v-1c0-2 3-3.3 6-3.3s6 1.3 6 3.3v1z"/></svg>
<div class="t" style="left:1406px;top:827.72px;font-size:26.67px;color:#5f6368;">Name</div>
<div class="r" style="left:1690px;top:825px;width:32px;height:32px;background:transparent;border:3.5px solid #444746;border-radius:4px;box-sizing:border-box;"></div>
<div class="r" style="left:94px;top:871px;width:1738px;height:60px;background:#f8f9fa;"></div>
<div class="t" style="left:109px;top:887.72px;font-size:26.67px;color:#333333;">Deploy the application</div>
<div class="r" style="left:664px;top:884.5px;width:189px;height:31.5px;background:#e6cff2;border-radius:16px;"></div>
<div class="t" style="left:677px;top:887.72px;font-size:26.67px;color:#5a3286;">To do</div>
<svg class="r" style="left:825px;top:896px;" width="15" height="8" viewBox="0 0 15 8"><path fill="#5a3286" d="M0 0h15l-7.5 8z"/></svg>
<div class="r" style="left:892px;top:884.5px;width:185px;height:31.5px;background:#e6e6e6;border-radius:16px;"></div>
<div class="t" style="left:905px;top:887.72px;font-size:26.67px;color:#3c4043;">Low</div>
<svg class="r" style="left:1049px;top:896px;" width="15" height="8" viewBox="0 0 15 8"><path fill="#3c4043" d="M0 0h15l-7.5 8z"/></svg>
<div class="t" style="left:322px;width:1000px;text-align:right;top:887.72px;font-size:26.67px;color:#333333;letter-spacing:0.8px;">8/14/2024</div>
<div class="r" style="left:1363px;top:884.5px;width:124px;height:31.5px;background:#e9eaee;border-radius:16px;"></div>
<svg class="r" style="left:1376px;top:892px;" width="15" height="16" viewBox="0 0 15 16"><circle cx="7.5" cy="4.5" r="3" fill="none" stroke="#5f6368" stroke-width="1.8"/><path fill="none" stroke="#5f6368" stroke-width="1.8" d="M1.5 14v-1c0-2 3-3.3 6-3.3s6 1.3 6 3.3v1z"/></svg>
<div class="t" style="left:1406px;top:887.72px;font-size:26.67px;color:#5f6368;">Name</div>
<div class="r" style="left:1690px;top:885px;width:32px;height:32px;background:transparent;border:3.5px solid #444746;border-radius:4px;box-sizing:border-box;"></div>
<div class="r" style="left:92px;top:451px;width:2px;height:481px;background:#2a5443;"></div>
<div class="r" style="left:92px;top:930px;width:1740px;height:2px;background:#2a5443;"></div>
<div class="r" style="left:92px;top:391px;width:553px;height:60px;background:transparent;border:3px solid #1a73e8;box-sizing:border-box;"></div>
<div class="r" style="left:637.5px;top:443px;width:16px;height:16px;background:#0b57d0;border-radius:50%;border:2px solid #fff;box-sizing:content-box;margin:-2px;"></div>
<div class="r" style="left:0px;top:1501px;width:1856px;height:25px;background:#ffffff;"></div>
<div class="r" style="left:0px;top:1501px;width:91px;height:25px;background:#f8f9fa;"></div>
<div class="r" style="left:90px;top:1501px;width:2px;height:25px;background:#e1e1e1;"></div>
<div class="r" style="left:0px;top:1500px;width:1856px;height:2px;background:#e1e1e1;"></div>
<div class="r" style="left:96px;top:1504.5px;width:390px;height:17px;background:#dadce0;border-radius:9px;"></div>
<div class="r" style="left:1772px;top:1501px;width:62px;height:25px;background:#f8f9fa;"></div>
<div class="r" style="left:1803px;top:1501px;width:1px;height:25px;background:#e8e8e8;"></div>
<svg class="r" style="left:1781px;top:1508px;" width="10" height="12" viewBox="0 0 10 12"><path fill="#9aa0a6" d="M8 0v12L1 6z"/></svg>
<svg class="r" style="left:1815px;top:1508px;" width="10" height="12" viewBox="0 0 10 12"><path fill="#9aa0a6" d="M2 0v12l7-6z"/></svg>
<div class="r" style="left:1832px;top:1436px;width:24px;height:65px;background:#f8f9fa;"></div>
<div class="r" style="left:1832px;top:1467px;width:24px;height:1px;background:#e8e8e8;"></div>
<svg class="r" style="left:1838px;top:1447px;" width="12" height="8" viewBox="0 0 12 8"><path fill="#9aa0a6" d="M0 8h12L6 1z"/></svg>
<svg class="r" style="left:1838px;top:1481px;" width="12" height="8" viewBox="0 0 12 8"><path fill="#9aa0a6" d="M0 0h12L6 7z"/></svg>
<div class="r" style="left:0px;top:1526px;width:2560px;height:2px;background:#e1e3e1;"></div>
<svg class="r" style="left:112px;top:1555px;" width="21" height="21" viewBox="0 0 21 21"><path fill="#444746" d="M8.6 0h3.8v8.6H21v3.8h-8.6V21H8.6v-8.6H0V8.6h8.6z"/></svg>
<svg class="r" style="left:189px;top:1556px;" width="28" height="18" viewBox="0 0 28 18"><path fill="#444746" d="M0 0h28v3.5H0zM0 7.25h28v3.5H0zM0 14.5h28V18H0z"/></svg>
<div class="r" style="left:267.5px;top:1528px;width:181px;height:72px;background:#e1e9f7;"></div>
<div class="t" style="left:292px;top:1552.45px;font-size:29px;color:#0b57d0;font-weight:bold;">Sheet1</div>
<svg class="r" style="left:408px;top:1561px;" width="17" height="9" viewBox="0 0 17 9"><path fill="#0b57d0" d="M0 0h17l-8.5 9z"/></svg>
<svg class="r" style="left:2494px;top:1557px;" width="16" height="22" viewBox="0 0 16 22"><path fill="none" stroke="#444746" stroke-width="3" d="M13 2L4 11l9 9"/></svg>
<div class="r" style="left:1888px;top:130px;width:640px;height:1360px;background:#ffffff;border:2px solid #e0e2e6;border-radius:32px;box-sizing:border-box;"></div>
<svg class="r" style="left:1926px;top:168px;" width="40" height="40" viewBox="0 0 24 24"><path fill="#1f1f1f" d="M12 0 Q12.9 11.1 24 12 Q12.9 12.9 12 24 Q11.1 12.9 0 12 Q11.1 11.1 12 0Z"/></svg>
<div class="t" style="left:1987px;top:171.48px;font-size:32.5px;color:#1f1f1f;-webkit-text-stroke:0.5px #1f1f1f;">Gemini</div>
<svg class="r" style="left:2300px;top:170px;" width="20" height="36" viewBox="0 0 20 36"><circle cx="10" cy="5.2" r="3.9" fill="#444746"/><circle cx="10" cy="17" r="3.9" fill="#444746"/><circle cx="10" cy="28.9" r="3.9" fill="#444746"/></svg>
<svg class="r" style="left:2370px;top:170px;" width="40" height="34" viewBox="2370 170 40 34"><path fill="none" stroke="#444746" stroke-width="3.4" d="M2392 175.5h10.4v10.5M2379 188v10.7h10.8"/></svg>
<svg class="r" style="left:2456px;top:172px;" width="32" height="30" viewBox="0 0 32 30"><path fill="none" stroke="#444746" stroke-width="3.6" d="M3.5 2l25 25M28.5 2l-25 25"/></svg>
<div class="r" style="left:1922px;top:259px;width:48px;height:48px;background:#2d6a1f;border-radius:50%;"></div>
<div class="t" style="left:1446px;width:1000px;text-align:center;top:271.99px;font-size:26px;color:#ffffff;">E</div>
<div class="t" style="left:1922px;top:328.62px;font-size:29.5px;color:#1f1f1f;letter-spacing:-0.27px;">Create a project management tracker with</div>
<div class="t" style="left:1922px;top:368.22px;font-size:29.5px;color:#1f1f1f;letter-spacing:-0.27px;">fields for dates, status and tasks</div>
<svg class="r" style="left:1927px;top:455px;" width="38" height="40" viewBox="0 0 24 24"><path fill="#3279f5" d="M12 0 Q12.9 11.1 24 12 Q12.9 12.9 12 24 Q11.1 12.9 0 12 Q11.1 11.1 12 0Z"/></svg>
<div class="r" style="left:1922px;top:520px;width:574px;height:570px;overflow:hidden;">
<div class="r" style="left:0px;top:0px;width:574px;height:2px;background:#c4c7c5;"></div>
<div class="r" style="left:0px;top:97px;width:574px;height:2px;background:#c4c7c5;"></div>
<div class="r" style="left:0px;top:279px;width:574px;height:2px;background:#c4c7c5;"></div>
<div class="r" style="left:0px;top:461px;width:574px;height:2px;background:#c4c7c5;"></div>
<div class="r" style="left:0px;top:0px;width:2px;height:600px;background:#c4c7c5;"></div>
<div class="r" style="left:146px;top:0px;width:2px;height:600px;background:#c4c7c5;"></div>
<div class="r" style="left:278px;top:0px;width:2px;height:600px;background:#c4c7c5;"></div>
<div class="r" style="left:396px;top:0px;width:2px;height:600px;background:#c4c7c5;"></div>
<div class="t" style="left:18px;top:37.33px;font-size:25px;color:#1f1f1f;-webkit-text-stroke:0.45px #1f1f1f;">Task</div>
<div class="t" style="left:164px;top:37.33px;font-size:25px;color:#1f1f1f;-webkit-text-stroke:0.45px #1f1f1f;">Status</div>
<div class="t" style="left:296px;top:37.33px;font-size:25px;color:#1f1f1f;-webkit-text-stroke:0.45px #1f1f1f;">Priority</div>
<div class="t" style="left:418px;top:37.33px;font-size:25px;color:#1f1f1f;-webkit-text-stroke:0.45px #1f1f1f;">Due date</div>
<div class="t" style="left:18px;top:145.53px;font-size:23px;color:#1f1f1f;">Draft a</div>
<div class="t" style="left:18px;top:177.53px;font-size:23px;color:#1f1f1f;">project</div>
<div class="t" style="left:18px;top:209.53px;font-size:23px;color:#1f1f1f;">proposal</div>
<div class="t" style="left:165px;top:177.53px;font-size:23px;color:#1f1f1f;">Complete</div>
<div class="t" style="left:296px;top:177.53px;font-size:23px;color:#1f1f1f;">High</div>
<div class="t" style="left:416px;top:177.53px;font-size:23px;color:#444746;">8/7/2024</div>
<div class="t" style="left:18px;top:295.23px;font-size:23px;color:#1f1f1f;">Get cross-</div>
<div class="t" style="left:18px;top:327.18px;font-size:23px;color:#1f1f1f;">functional</div>
<div class="t" style="left:18px;top:359.13px;font-size:23px;color:#1f1f1f;">alignment</div>
<div class="t" style="left:18px;top:391.08px;font-size:23px;color:#1f1f1f;">on</div>
<div class="t" style="left:18px;top:423.03px;font-size:23px;color:#1f1f1f;">proposal</div>
<div class="t" style="left:165px;top:358.93px;font-size:23px;color:#1f1f1f;">Complete</div>
<div class="t" style="left:296px;top:358.93px;font-size:23px;color:#1f1f1f;">High</div>
<div class="t" style="left:416px;top:358.93px;font-size:23px;color:#444746;">8/8/2024</div>
<div class="r" style="left:0;top:325px;width:574px;height:275px;background:linear-gradient(to bottom,rgba(255,255,255,0) 0px,rgba(255,255,255,0.45) 85px,rgba(255,255,255,0.6) 120px,rgba(255,255,255,0.88) 160px,rgba(255,255,255,0.95) 240px,#fff 245px);"></div>
</div>
<div class="r" style="left:2190px;top:1070px;width:40px;height:52px;background:#ffffff;"></div>
<div class="r" style="left:2194.2999999999997px;top:1124.5px;width:6.6px;height:6.6px;background:#0b5aa0;border-radius:50%;"></div>
<div class="r" style="left:2204.3999999999996px;top:1124.5px;width:6.6px;height:6.6px;background:#0b5aa0;border-radius:50%;"></div>
<div class="r" style="left:2214.5px;top:1124.5px;width:6.6px;height:6.6px;background:#0b5aa0;border-radius:50%;"></div>
<div class="r" style="left:2502px;top:252px;width:15px;height:884px;background:#dadce0;border-radius:8px;"></div>
<div class="r" style="left:1888px;top:1174px;width:640px;height:316px;background:#ffffff;border:2px solid #e0e2e6;border-radius:32px;box-sizing:border-box;"></div>
<div class="r" style="left:1922px;top:1208px;width:572px;height:119px;background:#eef2f8;border-radius:60px;"></div>
<div class="t" style="left:1963px;top:1252.41px;font-size:32px;color:#575b5f;">Enter a prompt here</div>
<div class="t" style="left:1707px;width:1000px;text-align:center;top:1363.68px;font-size:24px;color:#5f6368;letter-spacing:0.45px;">Gemini may display inaccurate information</div>
<div class="t" style="left:1707px;width:1000px;text-align:center;top:1395.68px;font-size:24px;color:#5f6368;letter-spacing:0.45px;">and does not represent Google's views.</div>
<div class="t" style="left:1707px;width:1000px;text-align:center;top:1427.68px;font-size:24px;color:#5f6368;letter-spacing:0.45px;">Double check responses. <span style="color:#1f1f1f;text-decoration:underline;text-underline-offset:5px;">Learn more</span></div>
<!--GEM_END-->
</body></html>
